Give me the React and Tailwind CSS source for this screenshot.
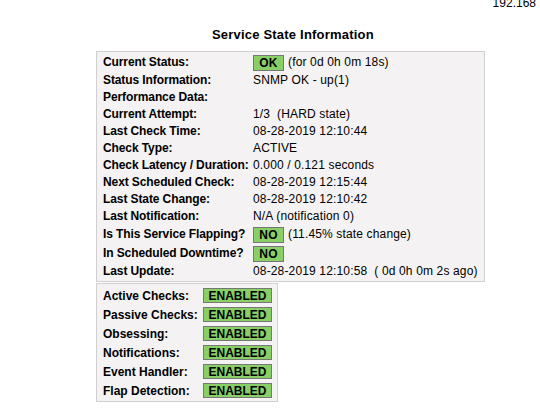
const rows = [
  { label: "Current Status:", badge: "OK", value: "(for 0d 0h 0m 18s)", h: "h-[19px]" },
  { label: "Status Information:", value: "SNMP OK - up(1)" },
  { label: "Performance Data:", value: "" },
  { label: "Current Attempt:", value: "1/3\u00a0\u00a0(HARD state)" },
  { label: "Last Check Time:", value: "08-28-2019 12:10:44" },
  { label: "Check Type:", value: "ACTIVE" },
  { label: "Check Latency / Duration:", value: "0.000\u00a0/\u00a00.121 seconds" },
  { label: "Next Scheduled Check:", value: "08-28-2019 12:15:44" },
  { label: "Last State Change:", value: "08-28-2019 12:10:42" },
  { label: "Last Notification:", value: "N/A (notification 0)" },
  { label: "Is This Service Flapping?", badge: "NO", value: "(11.45% state change)", h: "h-[19px]" },
  { label: "In Scheduled Downtime?", badge: "NO", value: "", h: "h-[19px]" },
  { label: "Last Update:", value: "08-28-2019 12:10:58\u00a0\u00a0( 0d 0h 0m 2s ago)" },
];

const checks = [
  "Active Checks:",
  "Passive Checks:",
  "Obsessing:",
  "Notifications:",
  "Event Handler:",
  "Flap Detection:",
];

const Badge = ({ children, className }) => (
  <div
    className={`flex items-center justify-center bg-[#88d066] border border-[#777777] font-bold text-[12px] leading-none ${className}`}
  >
    {children}
  </div>
);

export default function App() {
  return (
    <div
      className="relative w-[540px] h-[415px] bg-white text-black overflow-hidden text-[12px]"
      style={{ fontFamily: '"Liberation Sans", Arial, sans-serif' }}
    >
      <div className="absolute right-[4px] top-[-6px] text-[12px]">192.168</div>

      <div className="pt-[27px]">
        <div className="ml-[212px] text-[13px] font-bold leading-[16px] tracking-[0.2px]">
          Service State Information
        </div>

        <div className="ml-[96px] mt-[8px] w-[389px] bg-[#f4f2f2] border border-[#d0d0d0] pb-[2px]">
          {rows.map((row) => (
            <div key={row.label} className={`flex ${row.h ? row.h : "h-[17px]"}`}>
              <div className="w-[156px] pl-[6px] flex items-center font-bold whitespace-nowrap tracking-[-0.1px]">
                {row.label}
              </div>
              <div className="flex items-center whitespace-nowrap tracking-[0.15px]">
                {row.badge ? (
                  <>
                    <Badge className="w-[31px] h-[16px] self-end">{row.badge}</Badge>
                    <span className="ml-[4px]">{row.value}</span>
                  </>
                ) : (
                  <span>{row.value}</span>
                )}
              </div>
            </div>
          ))}
        </div>

        <div className="ml-[96px] mt-[1px] w-[182px] bg-[#f4f2f2] border border-[#d0d0d0] pt-[2px] pb-[1px]">
          {checks.map((c) => (
            <div key={c} className="flex h-[19px] items-center">
              <div className="w-[106px] pl-[6px] font-bold whitespace-nowrap">{c}</div>
              <Badge className="w-[69px] h-[15px]">ENABLED</Badge>
            </div>
          ))}
        </div>
      </div>
    </div>
  );
}
